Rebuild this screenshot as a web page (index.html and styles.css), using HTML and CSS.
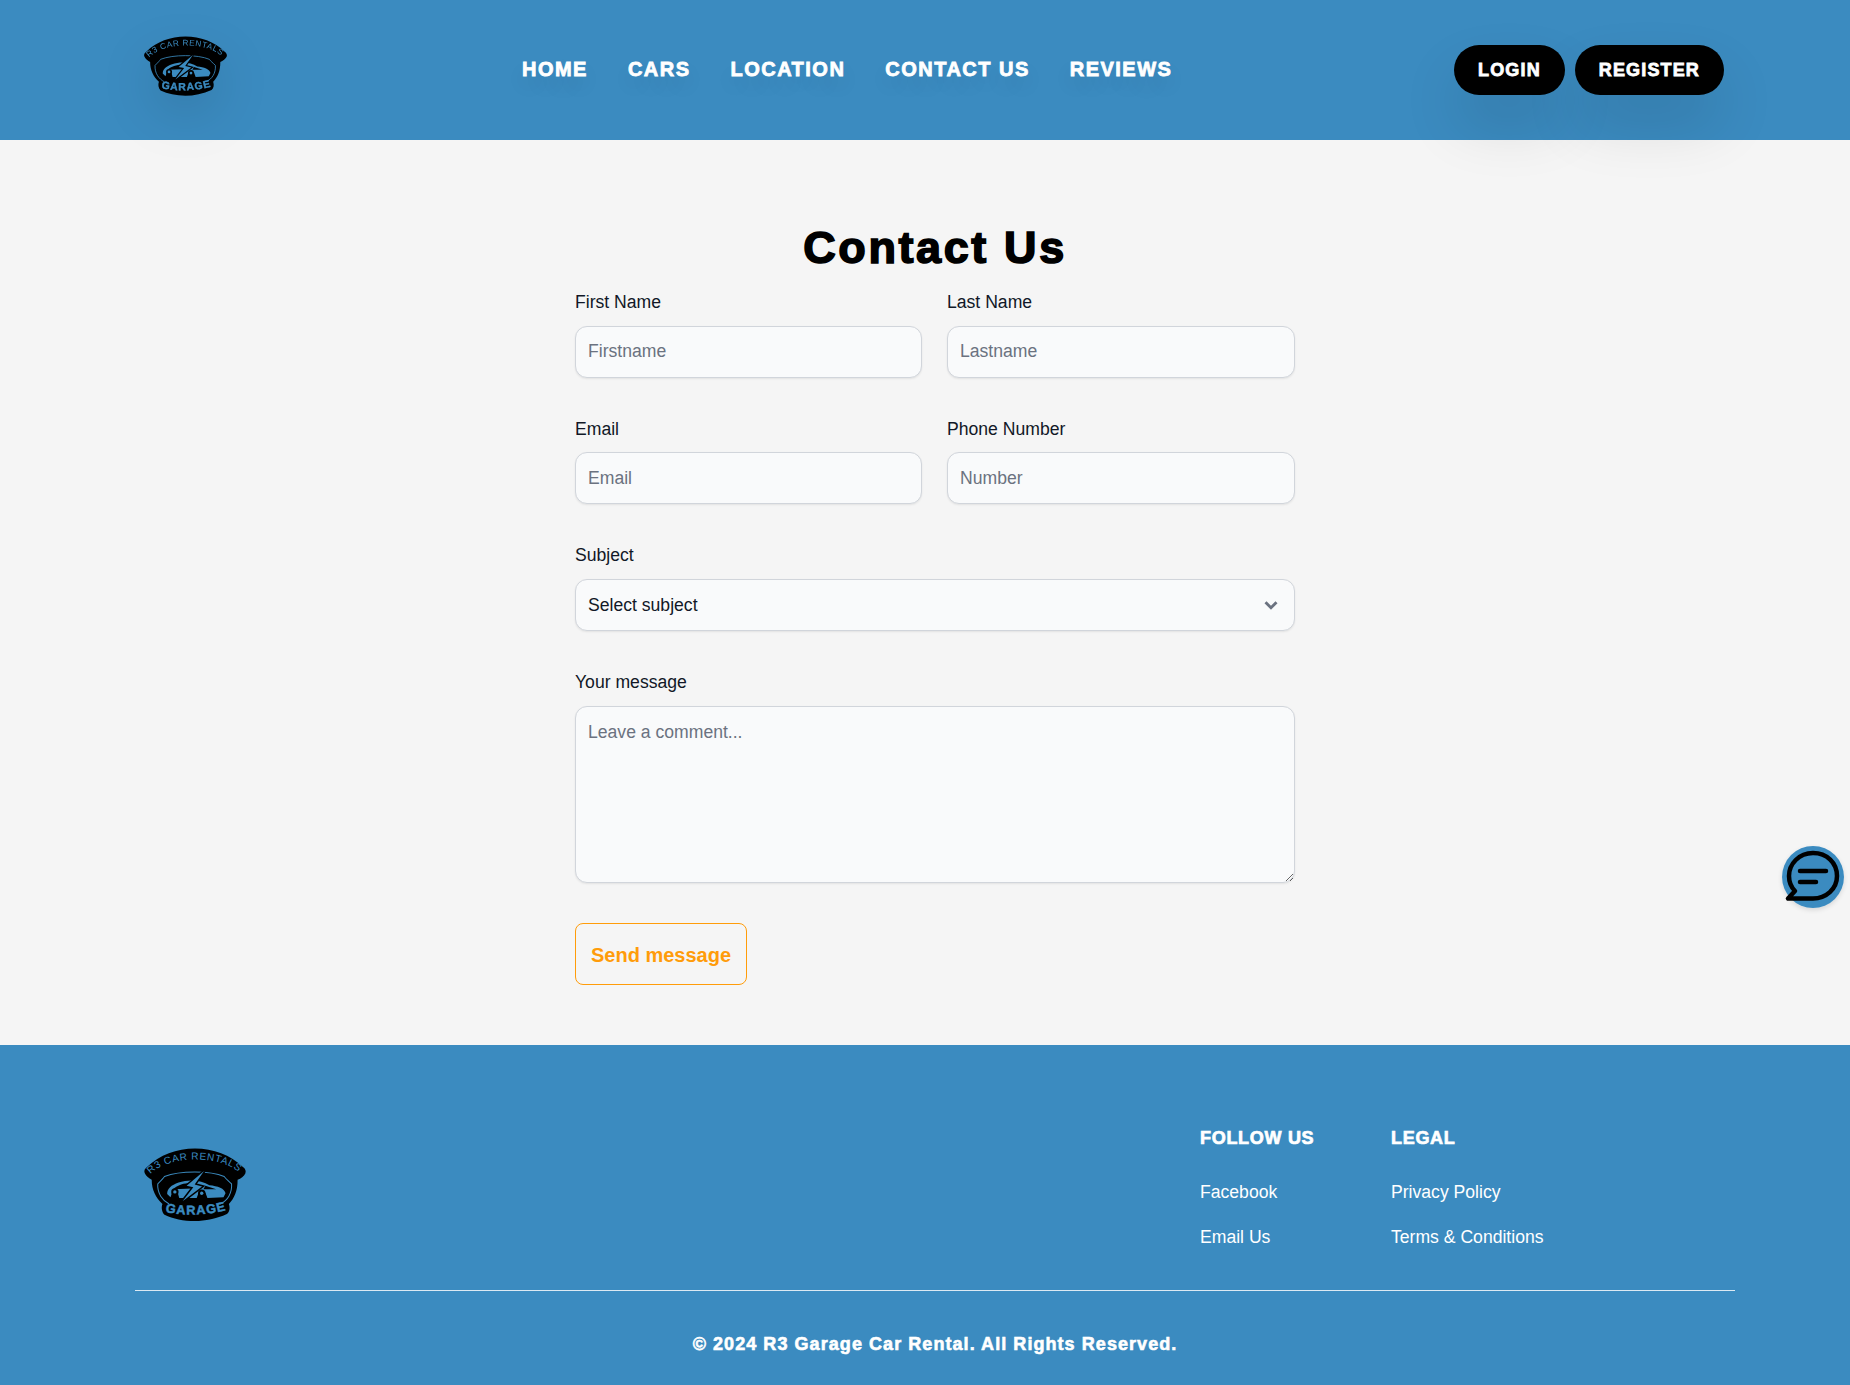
FILE: index.html

```html
<!DOCTYPE html>
<html lang="en">
<head>
  <meta charset="UTF-8" />
  <meta name="viewport" content="width=device-width, initial-scale=1.0" />
  <title>Contact Us - R3 Garage Car Rental</title>
  <link rel="stylesheet" href="styles.css">
</head>
<body>
  <svg class="defs" width="0" height="0" aria-hidden="true">
    <defs>
      <symbol id="logo" viewBox="40 50 310 225">
        <path d="M45 130 C42 122 46 116 52 112 C90 76 140 57 195 57 C250 57 300 76 338 112 C345 117 348 124 345 131 C341 139 332 146 322 150 C322 185 312 205 296 222 C300 234 298 246 290 252 C260 266 225 273 195 273 C160 273 130 266 104 254 C96 246 94 232 98 222 C78 204 66 180 66 150 C58 146 49 139 45 130 Z" fill="#000"/>
        <path d="M84 162 C96 150 100 146 104 140 C150 122 240 122 282 140 C288 148 294 152 304 162 C306 190 292 212 270 222 M118 222 C98 212 82 190 84 162" fill="none" stroke="#3b8bc0" stroke-width="3"/>
        <path id="logo-arc" d="M60 136 C110 76 272 74 328 130" fill="none"/>
        <path id="logo-low" d="M102 244 C150 258 240 256 294 238" fill="none"/>
        <text class="logo-top"><textPath href="#logo-arc" startOffset="50%" text-anchor="middle">R3 CAR RENTALS</textPath></text>
        <text class="logo-bottom"><textPath href="#logo-low" startOffset="50%" text-anchor="middle">GARAGE</textPath></text>
        <path d="M112 192 C112 176 124 166 146 158 C176 148 214 150 238 166 C262 168 284 176 286 190 L280 202 L232 204 L226 188 L206 188 L200 204 L148 204 L144 190 L126 190 L122 202 Z" fill="#3b8bc0"/>
        <path d="M130 178 C144 164 170 158 190 160 L186 176 Z M226 168 L258 178 L220 178 Z" fill="#000"/>
        <circle cx="135" cy="186" r="11" fill="#000"/>
        <circle cx="135" cy="186" r="5" fill="#3b8bc0"/>
        <circle cx="215" cy="190" r="11" fill="#000"/>
        <circle cx="215" cy="190" r="5" fill="#3b8bc0"/>
        <path d="M222 124 L170 168 L190 172 L158 214 L216 170 L194 164 Z" fill="#000" stroke="#000" stroke-width="9"/>
        <path d="M222 124 L170 168 L190 172 L158 214 L216 170 L194 164 Z" fill="#3b8bc0"/>
      </symbol>
    </defs>
  </svg>

  <header class="site-header">
    <a class="logo-link" href="#"><svg class="logo"><use href="#logo"/></svg></a>
    <nav class="main-nav">
      <a href="#">HOME</a>
      <a href="#">CARS</a>
      <a href="#">LOCATION</a>
      <a href="#">CONTACT US</a>
      <a href="#">REVIEWS</a>
    </nav>
    <div class="auth-buttons">
      <a class="pill" href="#">LOGIN</a>
      <a class="pill" href="#">REGISTER</a>
    </div>
  </header>

  <main class="contact">
    <h1>Contact Us</h1>
    <form class="contact-form">
      <div class="field">
        <label for="first">First Name</label>
        <input type="text" id="first" placeholder="Firstname">
      </div>
      <div class="field">
        <label for="last">Last Name</label>
        <input type="text" id="last" placeholder="Lastname">
      </div>
      <div class="field">
        <label for="email">Email</label>
        <input type="text" id="email" placeholder="Email">
      </div>
      <div class="field">
        <label for="phone">Phone Number</label>
        <input type="text" id="phone" placeholder="Number">
      </div>
      <div class="field wide">
        <label for="subject">Subject</label>
        <div class="select-wrap">
          <select id="subject">
            <option>Select subject</option>
          </select>
          <svg class="chevron" viewBox="0 0 20 20"><path d="M5 7.5l5 5 5-5" fill="none" stroke="#6b7280" stroke-width="2.6"/></svg>
        </div>
      </div>
      <div class="field wide">
        <label for="message">Your message</label>
        <textarea id="message" placeholder="Leave a comment..."></textarea>
      </div>
      <div class="wide">
        <button type="button" class="send">Send message</button>
      </div>
    </form>
  </main>

  <button class="chat" type="button" aria-label="Chat">
    <svg viewBox="0 0 62 62">
      <circle cx="31" cy="31" r="31" fill="#3b8bc0"/>
      <path d="M31 7 C17 7 7 18 7 30 C7 36 9 41 13 45 L6 52.5 L31 52.5 C44 52.5 55 43 55 30 C55 17 45 7 31 7 Z" fill="none" stroke="#000" stroke-width="4.5" stroke-linejoin="round"/>
      <path d="M18 25 H44 M18 36 H34" fill="none" stroke="#000" stroke-width="4.5" stroke-linecap="round"/>
    </svg>
  </button>

  <footer class="site-footer">
    <div class="footer-top">
      <a class="footer-logo" href="#"><svg class="logo-big"><use href="#logo"/></svg></a>
      <div class="footer-links">
        <div class="footer-col">
          <h2>FOLLOW US</h2>
          <a href="#">Facebook</a>
          <a href="#">Email Us</a>
        </div>
        <div class="footer-col">
          <h2>LEGAL</h2>
          <a href="#">Privacy Policy</a>
          <a href="#">Terms &amp; Conditions</a>
        </div>
      </div>
    </div>
    <p class="copyright">© 2024 R3 Garage Car Rental. All Rights Reserved.</p>
  </footer>
</body>
</html>
```

FILE: styles.css

```css
* { box-sizing: border-box; }
body { margin: 0; font-family: "Liberation Sans", Arial, sans-serif; font-size: 17.6px; color: #111827; background: #f5f5f5; }
a { text-decoration: none; color: inherit; }
.defs { display: block; }

.logo-top { font-size: 30px; fill: #3b8bc0; letter-spacing: 2px; }
.logo-bottom { font-size: 38px; font-weight: bold; fill: #3b8bc0; letter-spacing: 3px; stroke: #3b8bc0; stroke-width: 1.5; }

.site-header { position: relative; z-index: 1; height: 140px; background: #3b8bc0; display: flex; align-items: center; padding: 0 126px 0 135px; color: #fff; }
.logo-link { width: 100px; height: 63px; padding-left: 8px; margin-top: -9px; }
.logo { display: block; width: 85px; height: 63px; filter: drop-shadow(0 20px 24px rgba(0,0,0,.1)); }
.main-nav { display: flex; gap: 40px; margin-left: 287px; margin-top: -2px; }
.main-nav a { font-size: 20px; font-weight: bold; letter-spacing: 1.48px; -webkit-text-stroke: 0.8px #fff; text-shadow: 0 10px 20px rgba(0,0,0,.1); }
.auth-buttons { display: flex; gap: 10px; margin-left: auto; }
.pill { height: 50px; padding: 0 24px; border-radius: 25px; background: #000; color: #fff; display: flex; align-items: center; font-size: 18px; font-weight: bold; letter-spacing: 1.15px; -webkit-text-stroke: 0.8px #fff; box-shadow: 0 30px 60px rgba(0,0,0,.12); }

.contact { padding: 79px 0 59.8px 20px; }
.contact h1 { margin: 0 0 14px; text-align: center; font-size: 45px; line-height: 58px; font-weight: bold; letter-spacing: 2.6px; color: #000; -webkit-text-stroke: 1.6px #000; }
.contact-form { width: 720px; margin: 0 auto; display: grid; grid-template-columns: 347px 348px; column-gap: 25px; row-gap: 40.1px; }
.field label { display: block; line-height: 23px; margin-bottom: 11.6px; }
.wide { grid-column: 1 / 3; }
.field input, .field select, .field textarea { display: block; width: 100%; font: inherit; color: #111827; background: #f9fafb; border: 1px solid #d1d5db; border-radius: 12px; padding: 0 12px; box-shadow: 0 1px 2px rgba(0,0,0,.08); outline: none; }
.field input, .field select { height: 52px; }
.field select { appearance: none; }
.field textarea { height: 177.4px; padding: 15px 12px; resize: vertical; }
.field input::placeholder, .field textarea::placeholder { color: #6b7280; opacity: 1; }
.select-wrap { position: relative; }
.chevron { position: absolute; top: 15px; right: 13px; width: 22px; height: 22px; }
.send { width: 172px; height: 62px; background: transparent; border: 1px solid #ff9c0a; border-radius: 8px; color: #ff9c0a; font: bold 20px "Liberation Sans", Arial, sans-serif; padding: 2px 0 0; }

.chat { position: fixed; left: 1782px; top: 846px; width: 62px; height: 62px; padding: 0; border: none; background: none; border-radius: 50%; box-shadow: 0 2px 5px rgba(0,0,0,.12); }
.chat svg { display: block; width: 62px; height: 62px; }

.site-footer { background: #3b8bc0; color: #fff; height: 340px; padding: 81px 115px 0 135px; }
.footer-top { display: flex; justify-content: space-between; border-bottom: 1px solid #dbe9f3; height: 165px; }
.footer-logo { margin: 19px 0 0 8px; }
.logo-big { width: 104px; height: 78px; display: block; }
.footer-links { display: flex; margin-right: 191px; }
.footer-col { display: flex; flex-direction: column; align-items: flex-start; width: 191px; }
.footer-col:last-child { width: 153px; }
.footer-col h2 { margin: 0 0 31px; font-size: 18px; line-height: 24px; letter-spacing: 0.7px; -webkit-text-stroke: 0.7px #fff; }
.footer-col a { line-height: 22px; margin-bottom: 23px; white-space: nowrap; }
.copyright { margin: 41px 0 0; text-align: center; font-size: 18px; font-weight: bold; letter-spacing: 1.06px; -webkit-text-stroke: 0.6px #fff; line-height: 24px; }
```
